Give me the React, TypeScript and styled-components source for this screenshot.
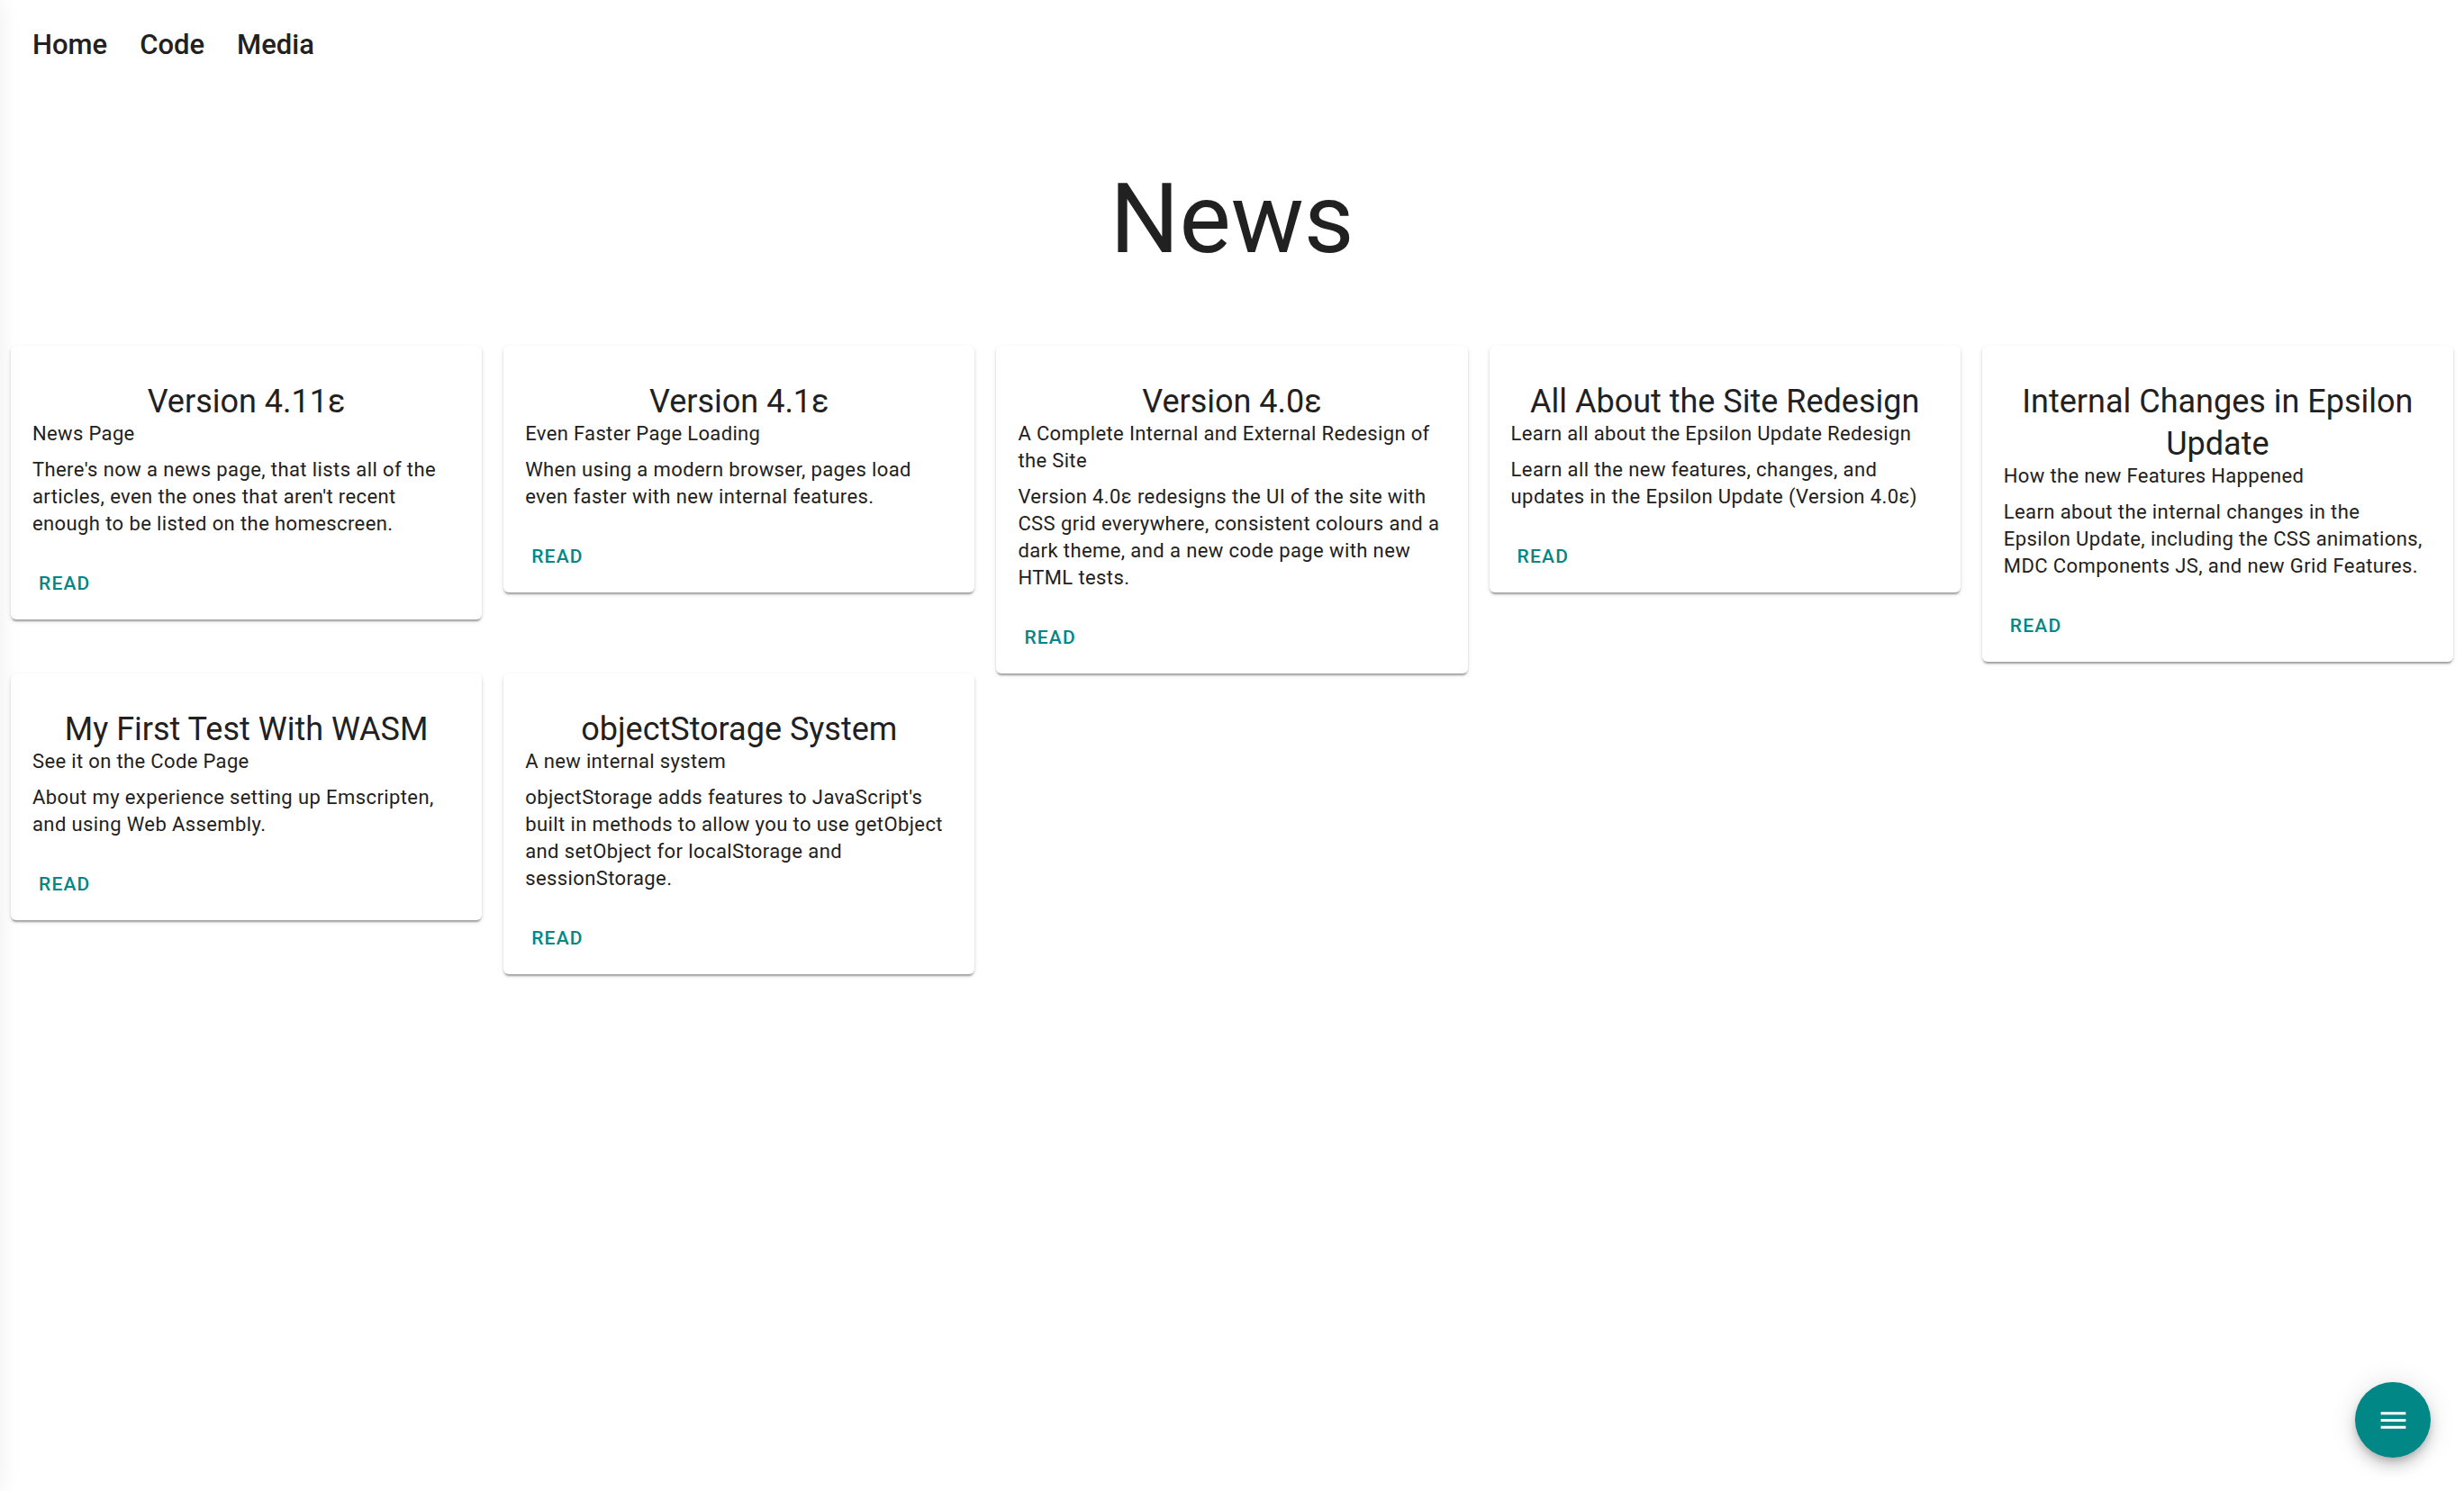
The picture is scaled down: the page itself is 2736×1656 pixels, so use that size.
import React from "react";
import styled, { createGlobalStyle } from "styled-components";

const GlobalStyle = createGlobalStyle`
  html, body {
    margin: 0;
    padding: 0;
    background: #ffffff;
  }
  body {
    font-family: Roboto, "Noto Sans", "Liberation Sans", sans-serif;
    color: #212121;
    -webkit-font-smoothing: antialiased;
  }
  * { box-sizing: border-box; }
`;

const Page = styled.div`
  min-height: 100vh;
  background: #ffffff;
  overflow: hidden;
`;

const Drawer = styled.aside`
  position: fixed;
  top: 0;
  left: 0;
  width: 448px;
  height: 100vh;
  background: #ffffff;
  transform: translateX(-100%);
  box-shadow: 0 0 24px rgba(0, 0, 0, 0.07);
  z-index: 5;
`;

const Nav = styled.nav`
  display: flex;
  align-items: center;
  gap: 36px;
  padding: 30px 0 0 36px;
`;

const NavLink = styled.a`
  font-family: Roboto, "Liberation Sans", sans-serif;
  font-size: 31px;
  font-weight: 500;
  line-height: 40px;
  color: #212121;
  text-decoration: none;
  cursor: pointer;
`;

const Heading = styled.h1`
  margin: 108px 0 0;
  text-align: center;
  font-family: Roboto, "Liberation Sans", sans-serif;
  font-size: 108px;
  font-weight: 400;
  line-height: 130px;
  letter-spacing: 0px;
  color: #212121;
`;

const Grid = styled.main`
  display: grid;
  grid-template-columns: repeat(5, 1fr);
  column-gap: 24px;
  row-gap: 0;
  align-items: start;
  padding: 0 12px;
  margin-top: 76px;
`;

const Card = styled.article`
  background: #ffffff;
  border-radius: 6px;
  box-shadow: 0 3.5px 2px -2px rgba(0, 0, 0, 0.2),
    0 2px 2px 0 rgba(0, 0, 0, 0.14), 0 2px 5px 0 rgba(0, 0, 0, 0.12);
  display: flex;
  flex-direction: column;
`;

const CardBody = styled.div`
  padding: 39px 24px 0;
`;

const Title = styled.h2`
  margin: 0;
  text-align: center;
  font-size: 36px;
  font-weight: 400;
  line-height: 47px;
  color: #212121;
`;

const Subtitle = styled.h3`
  margin: -3px 0 0;
  font-size: 22px;
  font-weight: 400;
  line-height: 30px;
  letter-spacing: 0.35px;
  color: #212121;
`;

const Text = styled.p`
  margin: 10px 0 0;
  font-size: 22px;
  font-weight: 400;
  line-height: 30px;
  letter-spacing: 0.4px;
  color: #212121;
`;

const Actions = styled.div`
  display: flex;
  align-items: center;
  padding: 19px 16px 9px;
`;

const ReadButton = styled.button`
  height: 63px;
  padding: 0 15px;
  border: none;
  background: transparent;
  border-radius: 6px;
  font-family: Roboto, "Liberation Sans", sans-serif;
  font-size: 21px;
  font-weight: 500;
  letter-spacing: 1.2px;
  text-transform: uppercase;
  color: #018786;
  cursor: pointer;
  display: inline-flex;
  align-items: center;
`;

const Fab = styled.button`
  position: fixed;
  right: 37px;
  bottom: 37px;
  width: 84px;
  height: 84px;
  border-radius: 50%;
  border: none;
  background: #018786;
  color: #ffffff;
  display: flex;
  align-items: center;
  justify-content: center;
  cursor: pointer;
  box-shadow: 0 5px 9px -2px rgba(0, 0, 0, 0.2),
    0 10px 17px 0 rgba(0, 0, 0, 0.14), 0 2px 31px 0 rgba(0, 0, 0, 0.12);
  z-index: 10;
`;

type Article = {
  title: string;
  subtitle: string;
  text: string;
};

const articles: Article[] = [
  {
    title: "Version 4.11ε",
    subtitle: "News Page",
    text: "There's now a news page, that lists all of the articles, even the ones that aren't recent enough to be listed on the homescreen.",
  },
  {
    title: "Version 4.1ε",
    subtitle: "Even Faster Page Loading",
    text: "When using a modern browser, pages load even faster with new internal features.",
  },
  {
    title: "Version 4.0ε",
    subtitle: "A Complete Internal and External Redesign of the Site",
    text: "Version 4.0ε redesigns the UI of the site with CSS grid everywhere, consistent colours and a dark theme, and a new code page with new HTML tests.",
  },
  {
    title: "All About the Site Redesign",
    subtitle: "Learn all about the Epsilon Update Redesign",
    text: "Learn all the new features, changes, and updates in the Epsilon Update (Version 4.0ε)",
  },
  {
    title: "Internal Changes in Epsilon Update",
    subtitle: "How the new Features Happened",
    text: "Learn about the internal changes in the Epsilon Update, including the CSS animations, MDC Components JS, and new Grid Features.",
  },
  {
    title: "My First Test With WASM",
    subtitle: "See it on the Code Page",
    text: "About my experience setting up Emscripten, and using Web Assembly.",
  },
  {
    title: "objectStorage System",
    subtitle: "A new internal system",
    text: "objectStorage adds features to JavaScript's built in methods to allow you to use getObject and setObject for localStorage and sessionStorage.",
  },
];

const MenuIcon = () => (
  <svg width="37" height="37" viewBox="0 0 24 24" fill="currentColor" aria-hidden="true">
    <path d="M3 18h18v-2H3v2zm0-5h18v-2H3v2zm0-7v2h18V6H3z" />
  </svg>
);

export default function App() {
  return (
    <Page>
      <GlobalStyle />
      <Drawer aria-hidden="true" />
      <Nav>
        <NavLink>Home</NavLink>
        <NavLink>Code</NavLink>
        <NavLink>Media</NavLink>
      </Nav>
      <Heading>News</Heading>
      <Grid>
        {articles.map((a) => (
          <Card key={a.title}>
            <CardBody>
              <Title>{a.title}</Title>
              <Subtitle>{a.subtitle}</Subtitle>
              <Text>{a.text}</Text>
            </CardBody>
            <Actions>
              <ReadButton>Read</ReadButton>
            </Actions>
          </Card>
        ))}
      </Grid>
      <Fab aria-label="menu">
        <MenuIcon />
      </Fab>
    </Page>
  );
}
